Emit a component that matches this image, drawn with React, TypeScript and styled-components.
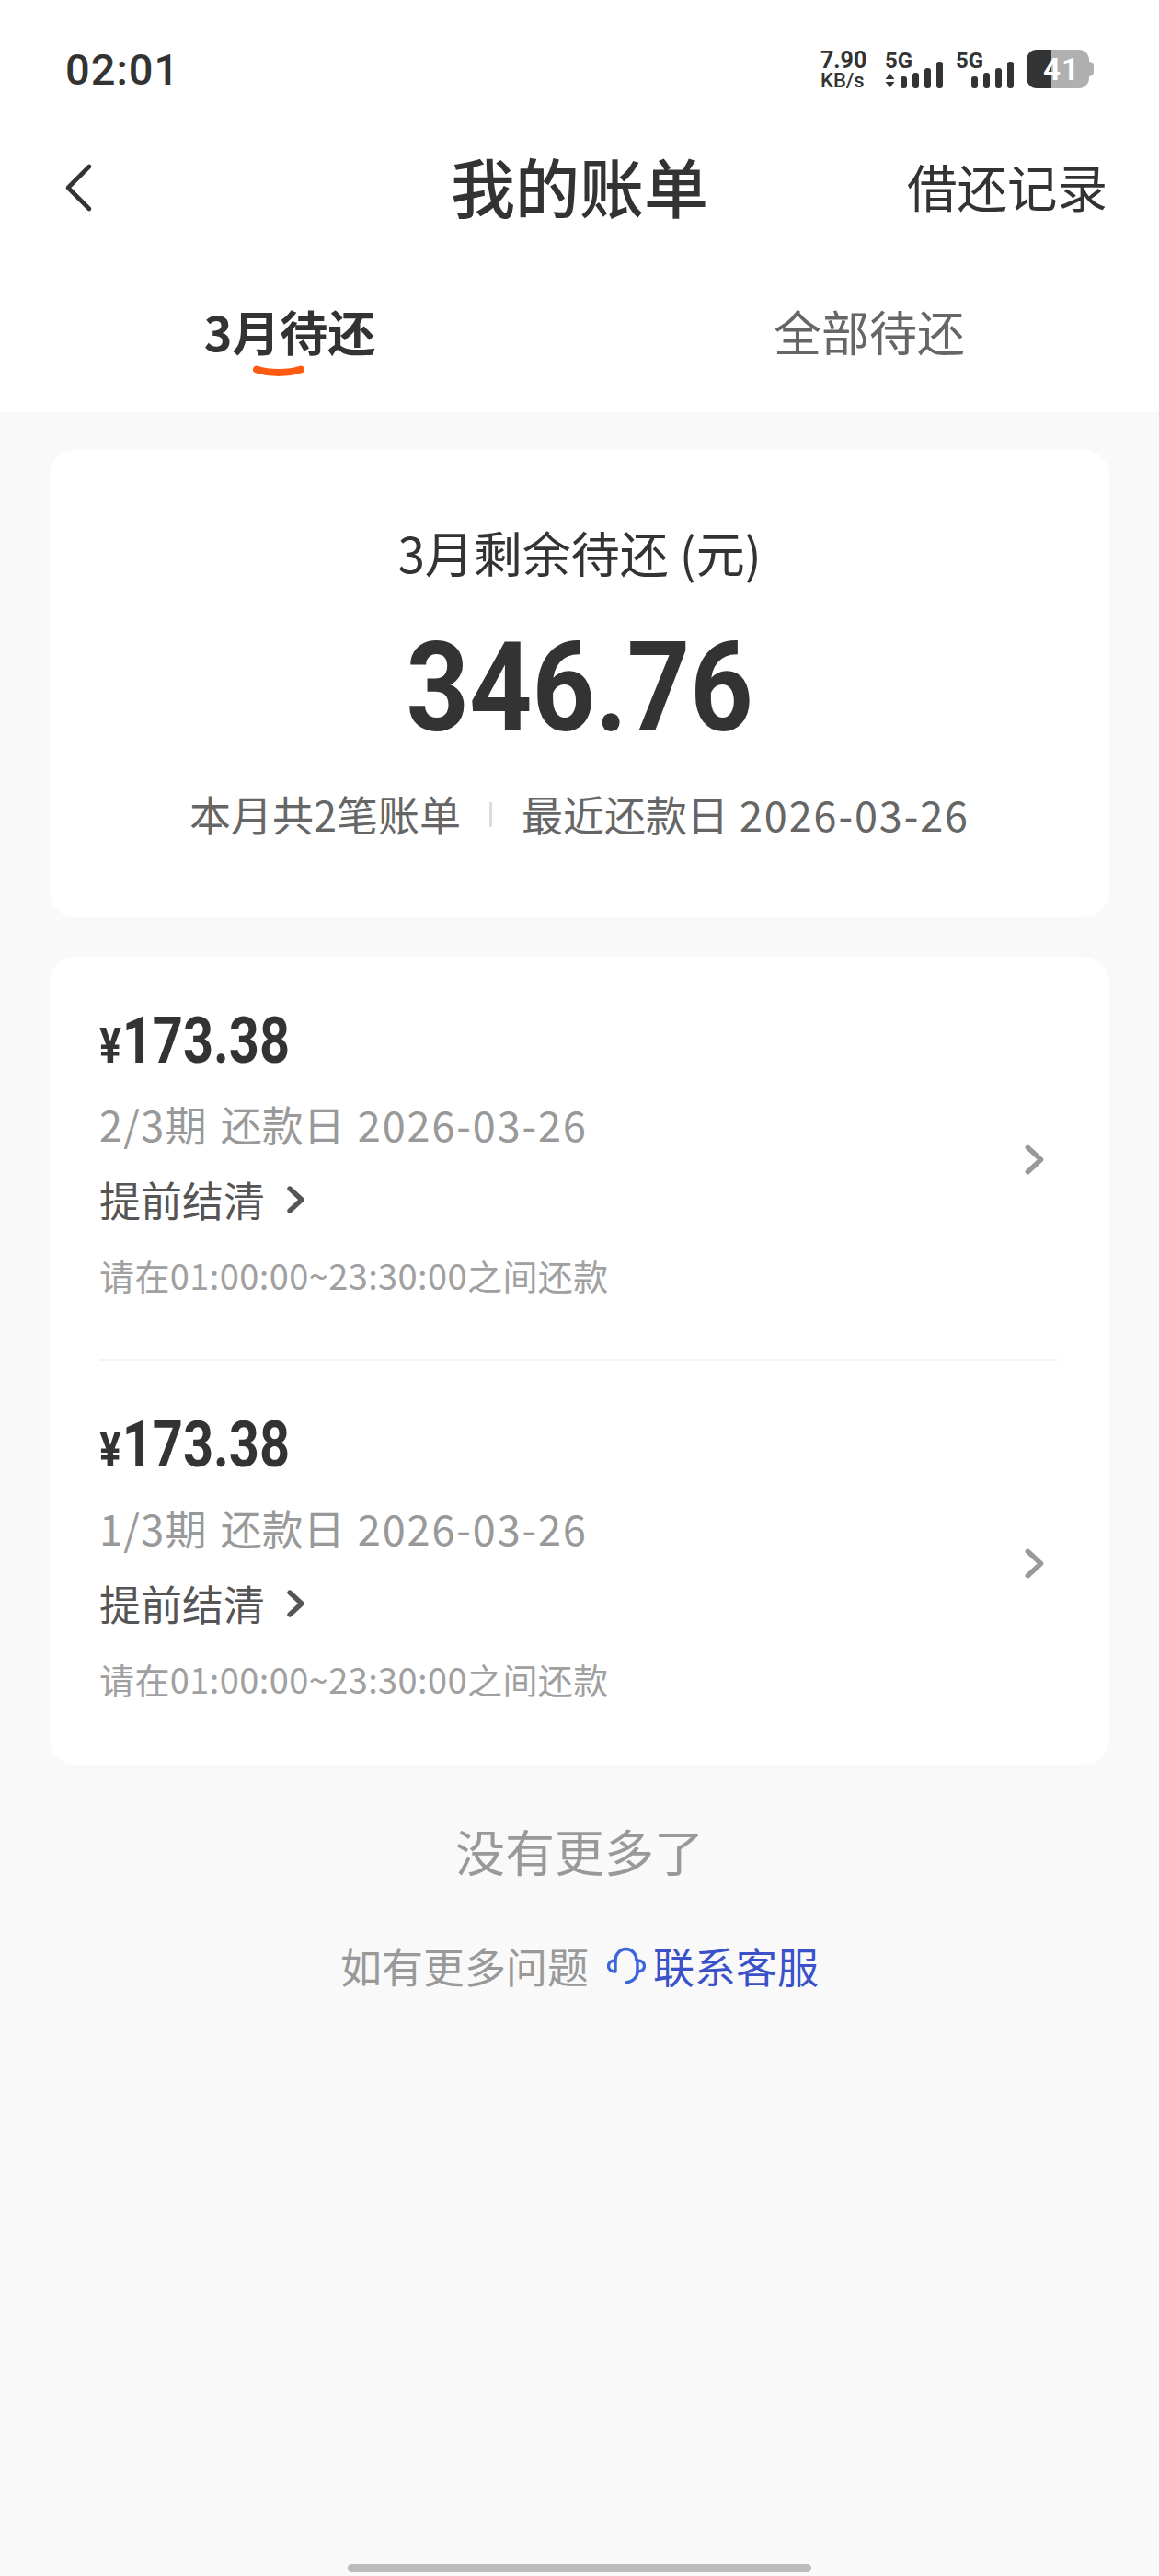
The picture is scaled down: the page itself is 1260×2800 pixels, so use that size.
import React from "react";
import styled, { createGlobalStyle } from "styled-components";

const Global = createGlobalStyle`
  html, body { margin: 0; padding: 0; background: #f9f9fa; }
  * { box-sizing: border-box; }
  body { font-family: "Noto Sans CJK SC", "Noto Sans", sans-serif; color: #333; }
`;

const Page = styled.div`
  width: 1260px;
  height: 2800px;
  display: flex;
  flex-direction: column;
  background: #f9f9fa;
  overflow: hidden;
`;

const Header = styled.header`
  background: #fff;
  height: 448px;
  display: flex;
  flex-direction: column;
`;

const StatusBar = styled.div`
  height: 150px;
  padding: 54px 76px 0 71px;
  display: flex;
  justify-content: space-between;
  align-items: flex-start;
`;

const Time = styled.div`
  font-family: "Roboto", sans-serif;
  font-size: 47px;
  line-height: 44px;
  font-weight: 500;
  color: #333;
  letter-spacing: 1px;
`;

const Indicators = styled.div`
  display: flex;
  align-items: flex-start;
  height: 42px;
`;

const Speed = styled.div`
  width: 70px;
  font-family: "Roboto", sans-serif;
  display: flex;
  flex-direction: column;
  color: #333;
`;
const SpeedValue = styled.span`
  font-size: 25px;
  line-height: 24px;
  font-weight: 700;
`;
const SpeedUnit = styled.span`
  font-size: 22px;
  line-height: 20px;
  font-weight: 500;
`;

const Sim = styled.div<{ $w: number }>`
  position: relative;
  width: ${(p) => p.$w}px;
  height: 42px;
`;
const SimLabel = styled.span`
  position: absolute;
  left: 0;
  top: 0;
  font-family: "Roboto", sans-serif;
  font-size: 24px;
  line-height: 24px;
  font-weight: 700;
  color: #333;
`;
const SimIcon = styled.svg`
  position: absolute;
  left: 0;
  top: 0;
`;

const Battery = styled.div`
  position: relative;
  width: 68px;
  height: 42px;
  border-radius: 11px;
  background: linear-gradient(90deg, #333 0, #333 27px, #b0b0b0 27px, #b0b0b0 100%);
  display: flex;
  align-items: center;
  justify-content: center;
  padding-left: 8px;
  color: #fff;
  font-family: "Roboto", sans-serif;
  font-size: 33px;
  font-weight: 700;
  letter-spacing: 1px;
  &::after {
    content: "";
    position: absolute;
    right: -5px;
    top: 13px;
    width: 5px;
    height: 16px;
    border-radius: 0 5px 5px 0;
    background: #b0b0b0;
  }
`;

const NavBar = styled.div`
  height: 110px;
  position: relative;
  display: flex;
  align-items: center;
  justify-content: center;
`;

const BackButton = styled.svg`
  position: absolute;
  left: 68px;
  top: 26px;
`;

const Title = styled.h1`
  margin: -6px 0 0;
  font-size: 70px;
  line-height: 110px;
  font-weight: 500;
  color: #333;
`;

const NavAction = styled.span`
  position: absolute;
  right: 56px;
  top: -3px;
  font-size: 54.5px;
  line-height: 110px;
  font-weight: 400;
  color: #333;
`;

const Tabs = styled.nav`
  display: grid;
  grid-template-columns: 1fr 1fr;
  padding-top: 65px;
`;

const Tab = styled.div<{ $active?: boolean }>`
  position: relative;
  text-align: center;
  font-size: 52px;
  line-height: 70px;
  font-weight: ${(p) => (p.$active ? 700 : 400)};
  color: ${(p) => (p.$active ? "#333" : "#666")};
`;

const TabMark = styled.svg`
  position: absolute;
  left: 275px;
  top: 72px;
`;

const Body = styled.main`
  display: flex;
  flex-direction: column;
  padding: 41px 54px 0;
  gap: 43px;
`;

const Card = styled.section`
  background: #fff;
  border-radius: 28px;
`;

const SummaryCard = styled(Card)`
  height: 508px;
  display: flex;
  flex-direction: column;
  align-items: center;
  padding-top: 75px;
`;

const SummaryLabel = styled.div`
  font-size: 53px;
  line-height: 72px;
  color: #333;
`;

const SummaryAmount = styled.div`
  margin-top: 46px;
  font-family: "Roboto", sans-serif;
  font-size: 135px;
  line-height: 132px;
  font-weight: 700;
  color: #333;
  transform: scaleX(0.885);
`;

const SummaryMeta = styled.div`
  margin-top: 39px;
  display: flex;
  align-items: center;
  font-size: 45px;
  line-height: 64px;
  color: #666;
`;

const MetaDivider = styled.span`
  width: 3px;
  height: 27px;
  margin: 0 32px 0 31px;
  background: #ddd;
`;

const DateText = styled.span`
  letter-spacing: 1.9px;
`;

const BillCard = styled(Card)`
  display: flex;
  flex-direction: column;
`;

const BillRow = styled.article<{ $divider?: boolean }>`
  position: relative;
  height: 439px;
  margin: 0 56px 0 54px;
  padding-top: 52px;
  border-bottom: ${(p) => (p.$divider ? "2px solid #f4f4f4" : "0")};
`;

const Amount = styled.div`
  display: flex;
  align-items: baseline;
  height: 78px;
  font-family: "Roboto", sans-serif;
  font-weight: 700;
  color: #333;
  line-height: 78px;
  transform-origin: left center;
  transform: scaleX(0.825);
`;
const Currency = styled.span`
  font-size: 54px;
  margin-right: 1px;
`;
const AmountValue = styled.span`
  font-size: 70px;
`;

const Due = styled.div`
  margin-top: 24px;
  display: flex;
  gap: 14px;
  font-size: 45px;
  line-height: 56px;
  color: #999;
`;

const Term = styled.span`
  letter-spacing: 1.3px;
`;

const Settle = styled.div`
  margin-top: 24px;
  display: flex;
  align-items: center;
  gap: 24px;
  font-size: 45px;
  line-height: 60px;
  color: #555;
`;

const Hint = styled.div`
  margin-top: 23px;
  font-size: 38px;
  line-height: 58px;
  letter-spacing: 0.4px;
  color: #a0a0a0;
`;

const RowChevron = styled.span`
  position: absolute;
  right: 14px;
  top: 204px;
`;

const NoMore = styled.div`
  margin-top: 54px;
  text-align: center;
  font-size: 54px;
  line-height: 80px;
  color: #999;
`;

const Contact = styled.div`
  margin-top: 53px;
  display: flex;
  justify-content: center;
  align-items: center;
  font-size: 45px;
  line-height: 64px;
  color: #999;
`;

const ContactLink = styled.span`
  display: flex;
  align-items: center;
  margin-left: 20px;
  color: #3a51c8;
  gap: 8px;
`;

const HomeBar = styled.div`
  width: 504px;
  height: 9px;
  margin: auto auto 4px;
  border-radius: 5px;
  background: #bbb;
`;

const Chevron = ({ color, h, w, sw }: { color: string; h: number; w: number; sw: number }) => (
  <svg width={w} height={h} viewBox="0 0 20 30" fill="none" style={{ display: "block" }}>
    <path d="M3 3l13 12L3 27" stroke={color} strokeWidth={sw} strokeLinecap="round" strokeLinejoin="round" />
  </svg>
);

const bills = ["2/3期", "1/3期"];
const bars = (
  <>
    <rect x="17" y="29" width="7" height="13" rx="3" fill="#333" />
    <rect x="30" y="25" width="7" height="17" rx="3" fill="#333" />
    <rect x="43" y="20" width="7" height="22" rx="3" fill="#333" />
    <rect x="56" y="13" width="7" height="29" rx="3" fill="#333" />
  </>
);

export default function App() {
  return (
    <Page>
      <Global />
      <Header>
        <StatusBar>
          <Time>02:01</Time>
          <Indicators>
            <Speed>
              <SpeedValue>7.90</SpeedValue>
              <SpeedUnit>KB/s</SpeedUnit>
            </Speed>
            <Sim $w={77}>
              <SimLabel>5G</SimLabel>
              <SimIcon width="64" height="42" viewBox="0 0 64 42">
                <path d="M5.5 26l5 6H.5zM5.5 41l5-6H.5z" fill="#333" />
                {bars}
              </SimIcon>
            </Sim>
            <Sim $w={77}>
              <SimLabel>5G</SimLabel>
              <SimIcon width="64" height="42" viewBox="0 0 64 42">
                {bars}
              </SimIcon>
            </Sim>
            <Battery>41</Battery>
          </Indicators>
        </StatusBar>
        <NavBar>
          <BackButton width="34" height="56" viewBox="0 0 34 56" fill="none">
            <path d="M29 5L6 28l23 23" stroke="#333" strokeWidth="4.6" strokeLinecap="round" strokeLinejoin="round" />
          </BackButton>
          <Title>我的账单</Title>
          <NavAction>借还记录</NavAction>
        </NavBar>
        <Tabs>
          <Tab $active>
            3月待还
            <TabMark width="56" height="16" viewBox="0 0 56 16" fill="none">
              <path d="M4 4.5C18 9 38 9 52 4.5" stroke="#ff5a12" strokeWidth="8" strokeLinecap="round" />
            </TabMark>
          </Tab>
          <Tab>全部待还</Tab>
        </Tabs>
      </Header>
      <Body>
        <SummaryCard>
          <SummaryLabel>3月剩余待还 (元)</SummaryLabel>
          <SummaryAmount>346.76</SummaryAmount>
          <SummaryMeta>
            本月共2笔账单
            <MetaDivider />
            最近还款日 <DateText>&nbsp;2026-03-26</DateText>
          </SummaryMeta>
        </SummaryCard>
        <BillCard>
          {bills.map((term, i) => (
            <BillRow key={term} $divider={i === 0}>
              <Amount>
                <Currency>¥</Currency>
                <AmountValue>173.38</AmountValue>
              </Amount>
              <Due>
                <Term>{term}</Term>
                <span>还款日</span>
                <DateText>2026-03-26</DateText>
              </Due>
              <Settle>
                提前结清
                <Chevron color="#555" w={20} h={30} sw={5.4} />
              </Settle>
              <Hint>请在01:00:00~23:30:00之间还款</Hint>
              <RowChevron>
                <Chevron color="#999" w={22} h={33} sw={5} />
              </RowChevron>
            </BillRow>
          ))}
        </BillCard>
      </Body>
      <NoMore>没有更多了</NoMore>
      <Contact>
        如有更多问题
        <ContactLink>
          <svg width="42" height="44" viewBox="12 8 42 44" fill="none">
            <path d="M21 24a11.5 12.5 0 0 1 23 0" stroke="#3c64dc" strokeWidth="3.4" strokeLinecap="round" />
            <path d="M21 24c-10 0-10 12 0 12zM45 24c10 0 10 12 0 12z" stroke="#3c64dc" strokeWidth="3.4" strokeLinejoin="round" />
            <path d="M45 36c0 6-5 11-12 12" stroke="#3c64dc" strokeWidth="3.4" strokeLinecap="round" />
          </svg>
          联系客服
        </ContactLink>
      </Contact>
      <HomeBar />
    </Page>
  );
}
